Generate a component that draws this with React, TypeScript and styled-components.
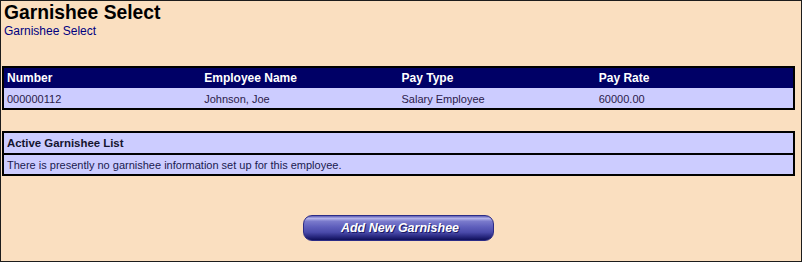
import React from "react";
import styled, { createGlobalStyle } from "styled-components";

const GlobalStyle = createGlobalStyle`
  html, body { margin: 0; padding: 0; }
  body { font-family: "Liberation Sans", Arial, sans-serif; }
  * { box-sizing: border-box; }
`;

const Page = styled.div`
  width: 802px;
  height: 262px;
  background: #fadfc0;
  border: 1px solid #1c1c1c;
  padding: 1px 6px 0 1px;
  font-family: "Liberation Sans", Arial, sans-serif;
`;

const Title = styled.h1`
  margin: 0;
  padding-left: 2px;
  font-size: 19.3px;
  line-height: 22px;
  font-weight: bold;
  color: #000;
`;

const Subtitle = styled.div`
  padding-left: 2px;
  font-size: 12px;
  line-height: 14px;
  color: #000080;
`;

const Table = styled.div<{ $top: number }>`
  margin-top: ${(p) => p.$top}px;
  width: 793px;
  border: 2px solid #000;
`;

const Row = styled.div<{ $bg: string; $h: number }>`
  display: grid;
  grid-template-columns: repeat(4, 1fr);
  height: ${(p) => p.$h}px;
  background: ${(p) => p.$bg};
  align-items: center;
`;

const FullRow = styled.div<{ $h: number; $sep?: boolean }>`
  display: flex;
  align-items: center;
  height: ${(p) => p.$h}px;
  background: #ccccff;
  padding: 0 3px;
  ${(p) => (p.$sep ? "border-top: 2px solid #000;" : "")}
`;

const HeadCell = styled.div`
  padding: 0 3px;
  font-size: 12px;
  font-weight: bold;
  color: #fff;
  white-space: nowrap;
`;

const DataCell = styled.div`
  padding: 1px 3px 0;
  font-size: 11px;
  color: #2b1a4a;
  white-space: nowrap;
`;

const ListHeader = styled.span`
  font-size: 11.4px;
  font-weight: bold;
  color: #14142e;
`;

const ListText = styled.span`
  font-size: 11px;
  color: #1a1a50;
`;

const ButtonBar = styled.div`
  width: 793px;
  display: flex;
  justify-content: center;
  margin-top: 39px;
`;

const PillButton = styled.button`
  width: 191px;
  height: 26px;
  border-radius: 9px;
  border: 1px solid #2c2c86;
  background: linear-gradient(
    to bottom,
    #5c5cb4 0%,
    #b4b4ea 10%,
    #7a7acc 22%,
    #5f5fbc 45%,
    #4a4aaa 68%,
    #28287f 86%,
    #10105a 100%
  );
  color: #fff;
  font-family: "Liberation Sans", Arial, sans-serif;
  font-size: 12.5px;
  font-weight: bold;
  font-style: italic;
  text-shadow: 1px 1px 0 #1a1a66;
  padding: 0 0 0 3px;
  cursor: pointer;
`;

const employee = {
  number: "000000112",
  name: "Johnson, Joe",
  payType: "Salary Employee",
  payRate: "60000.00",
};

export default function App() {
  return (
    <>
      <GlobalStyle />
      <Page>
        <Title>Garnishee Select</Title>
        <Subtitle>Garnishee Select</Subtitle>
        <Table $top={28}>
          <Row $bg="#000066" $h={20}>
            <HeadCell>Number</HeadCell>
            <HeadCell>Employee Name</HeadCell>
            <HeadCell>Pay Type</HeadCell>
            <HeadCell>Pay Rate</HeadCell>
          </Row>
          <Row $bg="#ccccff" $h={20}>
            <DataCell>{employee.number}</DataCell>
            <DataCell>{employee.name}</DataCell>
            <DataCell>{employee.payType}</DataCell>
            <DataCell>{employee.payRate}</DataCell>
          </Row>
        </Table>
        <Table $top={21}>
          <FullRow $h={20}>
            <ListHeader>Active Garnishee List</ListHeader>
          </FullRow>
          <FullRow $h={21} $sep>
            <ListText>
              There is presently no garnishee information set up for this employee.
            </ListText>
          </FullRow>
        </Table>
        <ButtonBar>
          <PillButton type="button">Add New Garnishee</PillButton>
        </ButtonBar>
      </Page>
    </>
  );
}
